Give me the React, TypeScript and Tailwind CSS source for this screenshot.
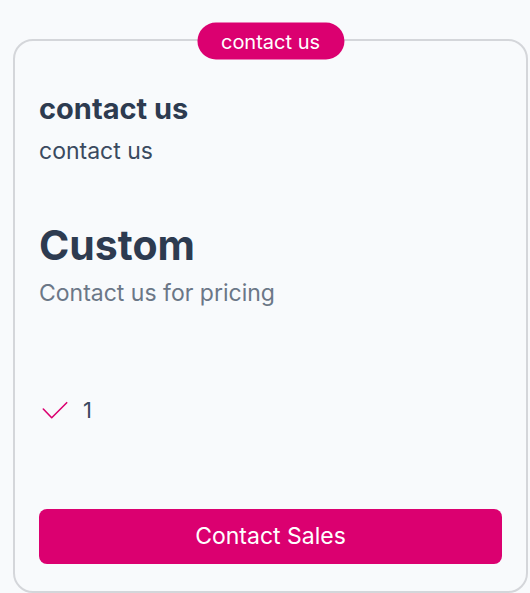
export default function App() {
  return (
    <div className="min-h-screen bg-[#f8fafc] pl-[13px] pt-[39px] font-['Inter',sans-serif]">
      <div className="relative flex h-[554px] w-[515px] flex-col rounded-[20px] border-2 border-[#d4d6da] bg-[#f8fafc] px-6 pt-[50px] pb-[27px]">
        <span className="absolute left-1/2 top-0 flex h-[37px] -translate-x-1/2 -translate-y-1/2 items-center rounded-full bg-[#db0070] px-6 text-[20px] text-white">
          contact us
        </span>

        <h2 className="text-[29px] font-bold leading-[36px] text-[#2d3b50]">contact us</h2>
        <p className="mt-[9px] text-[23px] leading-[30px] text-[#3a4a60]">contact us</p>

        <div className="mt-[56px] text-[41px] font-bold leading-[46px] text-[#2d3b50]">Custom</div>
        <p className="mt-[10px] text-[23px] leading-[30px] text-[#6b7787]">Contact us for pricing</p>

        <ul className="mt-[87px]">
          <li className="flex items-center gap-[15px] text-[22px] leading-[30px] text-[#3a4a60]">
            <svg width="28" height="28" viewBox="0 0 28 28" fill="none" className="ml-[1px] shrink-0">
              <polyline
                points="3.3,13 11.7,21.7 26.7,6.7"
                stroke="#db0070"
                strokeWidth="1.6"
                strokeLinecap="round"
                strokeLinejoin="round"
              />
            </svg>
            <span>1</span>
          </li>
        </ul>

        <button className="mt-auto h-[55px] w-full rounded-lg bg-[#db0070] text-[23px] text-white">
          Contact Sales
        </button>
      </div>
    </div>
  );
}
